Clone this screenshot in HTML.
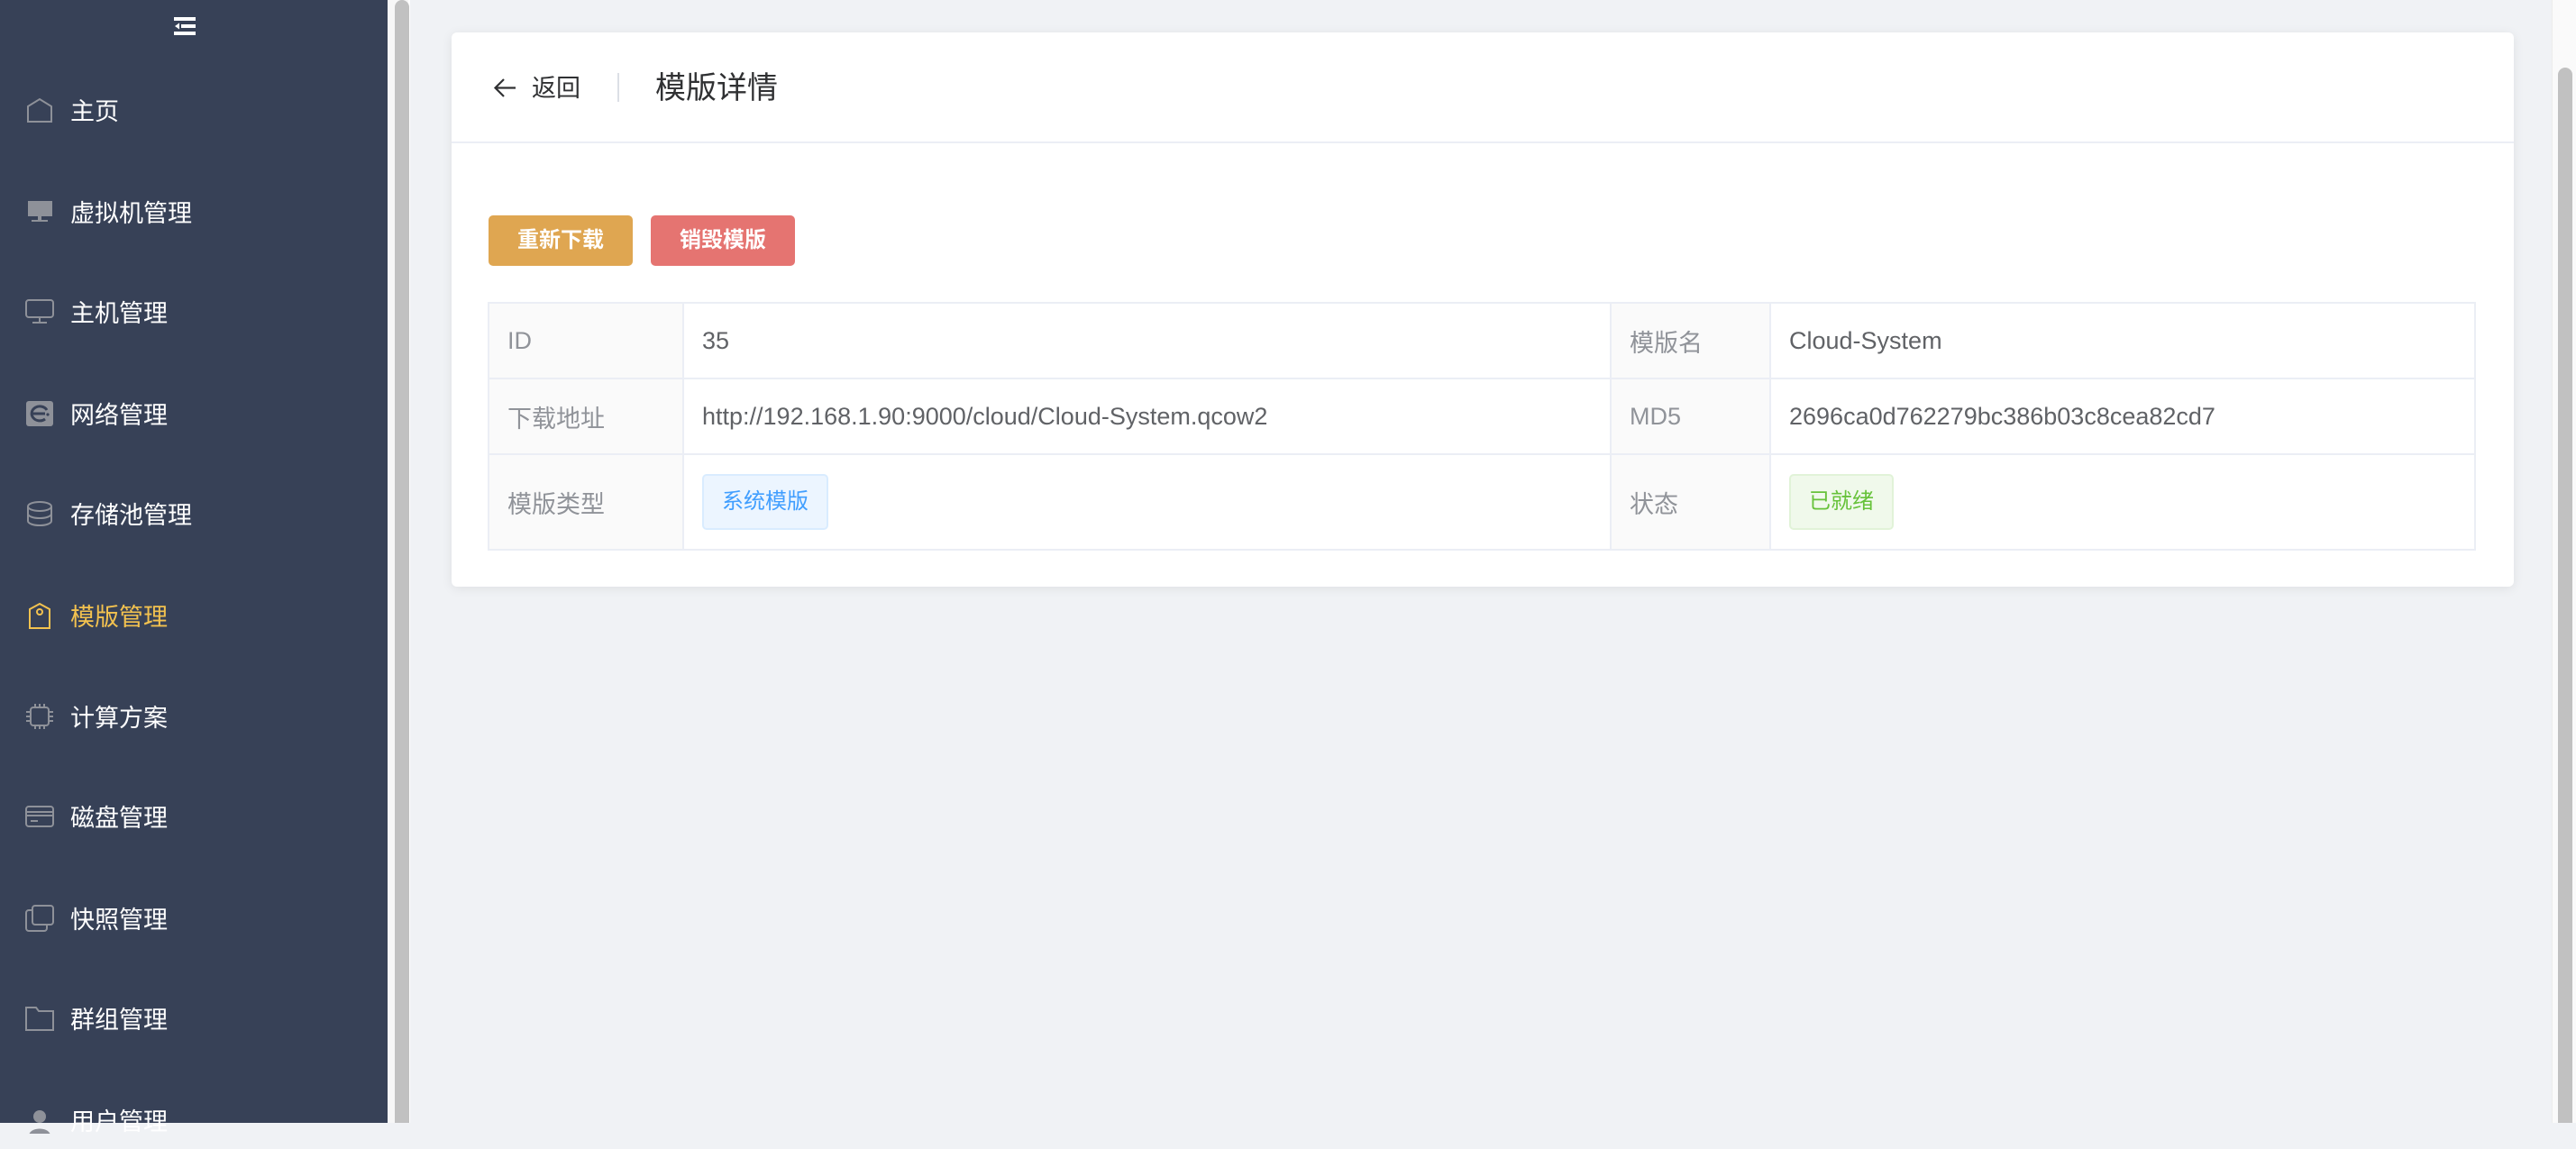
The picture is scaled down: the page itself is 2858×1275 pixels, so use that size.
<!DOCTYPE html>
<html><head><meta charset="utf-8"><style>
*{margin:0;padding:0;box-sizing:border-box}
html,body{width:2858px;height:1246px;overflow:hidden;background:#f0f2f5;font-family:"Liberation Sans","Noto Sans CJK SC",sans-serif}
.side{position:absolute;left:0;top:0;width:430px;height:1246px;background:#374157}
.sbtrack{position:absolute;left:430px;top:0;width:25px;height:1246px;background:#f7f7f7;border-right:2px solid #fff}
.sbthumb{position:absolute;left:438px;top:0;width:16px;height:1246px;background:#c1c1c1;border-radius:8px 8px 0 0}
.ham{position:absolute;left:193px;top:19px;width:24px;height:20px}
.item{position:absolute;left:0;height:60px;width:430px;color:#fff;font-size:27px;line-height:60px}
.item .ic{position:absolute;left:28px;top:15px;width:32px;height:30px}
.item span{position:absolute;left:78px;top:2px}
.item.act{color:#f3c24f}
.rtrack{position:absolute;left:2831px;top:0;width:27px;height:1246px;background:#fafafa;border-left:1px solid #ececec}
.rthumb{position:absolute;left:2838px;top:75px;width:16px;height:1171px;background:#c1c1c1;border-radius:8px 8px 0 0}
.card{position:absolute;left:501px;top:36px;width:2288px;height:615px;background:#fff;border-radius:6px;box-shadow:0 2px 12px rgba(0,0,0,.08)}
.hdr{position:absolute;left:0;top:0;width:100%;height:123px;border-bottom:2px solid #ebeef5}
.back{position:absolute;left:46px;top:46px;font-size:27px;color:#303133;line-height:32px;white-space:nowrap}
.div{position:absolute;left:184px;top:45px;width:2px;height:32px;background:#dcdfe6}
.title{position:absolute;left:226px;top:41px;font-size:34px;color:#303133;line-height:42px}
.btn{position:absolute;top:203px;width:160px;height:56px;border-radius:5px;color:#fff;font-size:24px;font-weight:bold;text-align:center;line-height:56px}
table{position:absolute;left:40px;top:299px;width:2206px;border-collapse:collapse;font-size:27px}
td{border:2px solid #ebeef5;padding:0 20px;color:#606266}
td.l{background:#fafafa;color:#909399}
.tag{display:inline-block;height:62px;line-height:58px;padding:0 20px;border-radius:5px;font-size:24px}
</style></head><body>
<div class="side">
<svg class="ham" viewBox="0 0 24 20"><rect x="0" y="0" width="24" height="4" fill="#fff"/><rect x="8" y="8" width="16" height="4" fill="#fff"/><rect x="0" y="16" width="24" height="4" fill="#fff"/><path d="M1 10 L6 6.5 L6 13.5Z" fill="#fff"/></svg>

<div class="item" style="top:92px"><svg class="ic" viewBox="0 0 32 30"><path d="M3 28V11L16 3L29 11V28Z" fill="none" stroke="#8e9199" stroke-width="2"/></svg><span>主页</span></div>
<div class="item" style="top:205px"><svg class="ic" viewBox="0 0 32 30"><rect x="3" y="3" width="27" height="17" fill="#8e9199"/><rect x="14" y="20" width="4" height="4" fill="#8e9199"/><rect x="7" y="24" width="18" height="2" fill="#8e9199"/></svg><span>虚拟机管理</span></div>
<div class="item" style="top:316px"><svg class="ic" viewBox="0 0 32 30"><rect x="1" y="2" width="30" height="19" rx="3" fill="none" stroke="#8e9199" stroke-width="2"/><path d="M16 21V27M8 27H24" stroke="#8e9199" stroke-width="2"/></svg><span>主机管理</span></div>
<div class="item" style="top:429px"><svg class="ic" viewBox="0 0 32 30"><rect x="1" y="1" width="30" height="28" rx="3" fill="#8e9199"/><path d="M24 11A9 8 0 1 0 22 21M8 15H22" fill="none" stroke="#374157" stroke-width="3"/><circle cx="25" cy="16" r="1.6" fill="#374157"/></svg><span>网络管理</span></div>
<div class="item" style="top:540px"><svg class="ic" viewBox="0 0 32 30"><g fill="none" stroke="#8e9199" stroke-width="2"><ellipse cx="16" cy="7" rx="13" ry="5"/><path d="M3 7V23C3 26 9 28 16 28S29 26 29 23V7M3 15C3 18 9 20 16 20S29 18 29 15"/></g></svg><span>存储池管理</span></div>
<div class="item act" style="top:653px"><svg class="ic" viewBox="0 0 32 30"><path d="M5 29V8L16 2L27 8V29Z" fill="none" stroke="#f3c24f" stroke-width="2"/><circle cx="16" cy="11" r="3" fill="none" stroke="#f3c24f" stroke-width="2"/></svg><span>模版管理</span></div>
<div class="item" style="top:765px"><svg class="ic" viewBox="0 0 32 30"><g fill="none" stroke="#8e9199" stroke-width="2"><rect x="6" y="5" width="20" height="20" rx="3"/><path d="M11 1V5M16 1V5M21 1V5M11 25V29M16 25V29M21 25V29M1 10H6M1 15H6M1 20H6M26 10H31M26 15H31M26 20H31"/></g></svg><span>计算方案</span></div>
<div class="item" style="top:876px"><svg class="ic" viewBox="0 0 32 30"><g fill="none" stroke="#8e9199" stroke-width="2"><rect x="1" y="4" width="30" height="22" rx="3"/><path d="M1 10H31M1 14H31M6 20H14"/></g></svg><span>磁盘管理</span></div>
<div class="item" style="top:989px"><svg class="ic" viewBox="0 0 32 30"><g fill="none" stroke="#8e9199" stroke-width="2"><rect x="8" y="1" width="23" height="21" rx="3"/><path d="M8 6H4A3 3 0 0 0 1 9V26A3 3 0 0 0 4 29H21A3 3 0 0 0 24 26V22"/></g></svg><span>快照管理</span></div>
<div class="item" style="top:1100px"><svg class="ic" viewBox="0 0 32 30"><path d="M1 3H12L15 7H31V28H1Z" fill="none" stroke="#8e9199" stroke-width="2"/></svg><span>群组管理</span></div>
<div class="item" style="top:1213px"><svg class="ic" viewBox="0 0 32 30"><circle cx="16" cy="11" r="7" fill="#8e9199"/><path d="M4 32C5 22 27 22 28 32Z" fill="#8e9199"/></svg><span>用户管理</span></div>
</div>
<div class="sbtrack"></div><div class="sbthumb"></div>

<div class="card">
<div class="hdr">
<div class="back"><svg width="27" height="27" viewBox="0 0 27 27" style="vertical-align:-4px;margin-right:16px"><path d="M25 13.5H3M12 4L2.5 13.5L12 23" fill="none" stroke="#303133" stroke-width="2.2"/></svg>返回</div>
<div class="div"></div>
<div class="title">模版详情</div>
</div>
<div class="btn" style="left:41px;background:#dfa651">重新下载</div>
<div class="btn" style="left:221px;background:#e57471">销毁模版</div>
<table>
<tr style="height:84px"><td class="l" style="width:216px">ID</td><td style="width:1029px">35</td><td class="l" style="width:177px">模版名</td><td>Cloud-System</td></tr>
<tr style="height:84px"><td class="l">下载地址</td><td>http://192.168.1.90:9000/cloud/Cloud-System.qcow2</td><td class="l">MD5</td><td>2696ca0d762279bc386b03c8cea82cd7</td></tr>
<tr style="height:106px"><td class="l">模版类型</td><td><span class="tag" style="background:#ecf5ff;border:2px solid #d9ecff;color:#409eff">系统模版</span></td><td class="l">状态</td><td><span class="tag" style="background:#f0f9eb;border:2px solid #e1f3d8;color:#67c23a">已就绪</span></td></tr>
</table>
</div>
<div class="rtrack"></div><div class="rthumb"></div>
</body></html>
